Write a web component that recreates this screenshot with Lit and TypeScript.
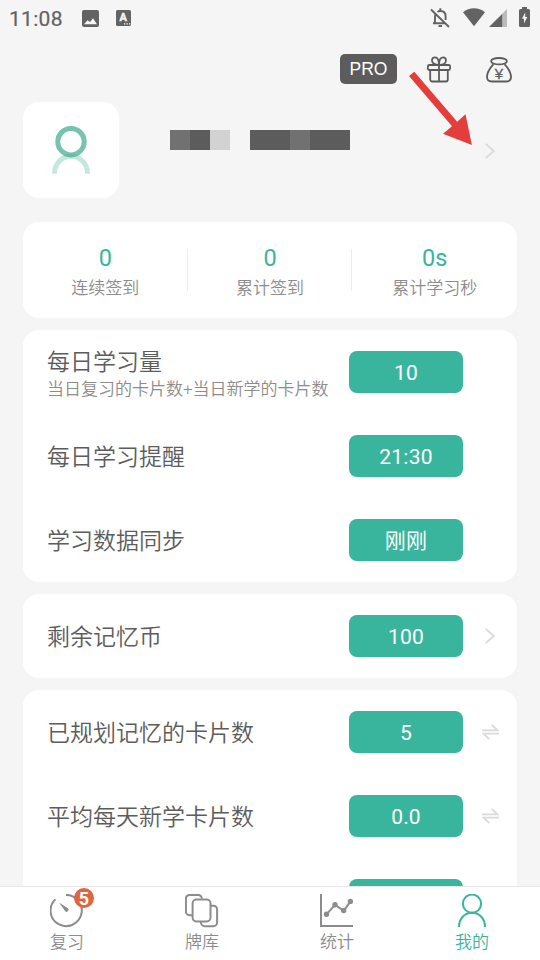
import { css, html, LitElement, svg } from 'lit';
import type { TemplateResult } from 'lit';
import { customElement, property } from 'lit/decorators.js';
import { classMap } from 'lit/directives/class-map.js';

interface Setting {
    label: string;
    note?: string;
    value: string;
    trailing?: 'more' | 'swap';
}

interface Tab {
    label: string;
    icon: TemplateResult;
    badge?: string;
    active?: boolean;
}

const stats = [
    { value: '0', label: '连续签到' },
    { value: '0', label: '累计签到' },
    { value: '0s', label: '累计学习秒' },
];

const groups: Setting[][] = [
    [
        { label: '每日学习量', note: '当日复习的卡片数+当日新学的卡片数', value: '10' },
        { label: '每日学习提醒', value: '21:30' },
        { label: '学习数据同步', value: '刚刚' },
    ],
    [
        { label: '剩余记忆币', value: '100', trailing: 'more' },
    ],
    [
        { label: '已规划记忆的卡片数', value: '5', trailing: 'swap' },
        { label: '平均每天新学卡片数', value: '0.0', trailing: 'swap' },
        { label: '', value: '' },
    ],
];

const tabs: Tab[] = [
    {
        label: '复习',
        badge: '5',
        icon: svg`
            <path d="M16 .9A15.6 15.6 0 1 1 5.4 5.2"/>
            <path class="solid" d="M9 8.6L17.9 14.2A2 2 0 0 1 15.2 17.3Z"/>`,
    },
    {
        label: '牌库',
        icon: svg`
            <path d="M7 21.2H4.6a3.7 3.7 0 0 1-3.7-3.7V4.6A3.7 3.7 0 0 1 4.6.9h8.5a3.7 3.7 0 0 1 3.7 3.7"/>
            <rect x="7.6" y="5.5" width="17.9" height="21.9" rx="3.7"/>
            <path d="M16 27.8v.7a3.7 3.7 0 0 0 3.7 3.7h8.7a3.7 3.7 0 0 0 3.7-3.7V15.4a3.7 3.7 0 0 0-3.7-3.7h-2.5"/>`,
    },
    {
        label: '统计',
        icon: svg`
            <path d="M1 0V32H33"/>
            <path d="M6.5 20.3L15 10.8L23.7 16.8L30.4 7.3"/>
            <g class="solid">
                <circle cx="6.5" cy="20.3" r="2.7"/>
                <circle cx="15" cy="10.8" r="2.7"/>
                <circle cx="23.7" cy="16.6" r="2.7"/>
                <circle cx="30.4" cy="7.4" r="2.7"/>
            </g>`,
    },
    {
        label: '我的',
        active: true,
        icon: svg`
            <circle cx="17" cy="9.7" r="9.1"/>
            <path d="M4 33C4 24.5 9.5 18.8 17 18.8S30 24.5 30 33"/>`,
    },
];

@customElement('status-bar')
export class StatusBar extends LitElement {

    static styles = css`
            :host {
                display: flex;
                align-items: flex-start;
                height: 36px;
                padding: 7px 10px 0 9px;
                box-sizing: border-box;
                color: #636363;
            }
            svg {
                display: block;
                fill: currentColor;
            }
            .time {
                width: 73px;
                font-size: 21px;
                line-height: 24px;
                letter-spacing: .3px;
                -webkit-text-stroke: .2px currentColor;
            }
            .picture {
                margin: 3px 17px 0 0;
            }
            .keyboard {
                margin-top: 3px;
            }
            .letter {
                font: bold 11px Roboto, sans-serif;
                fill: #f5f5f5;
                stroke: #f5f5f5;
                stroke-width: .4;
            }
            .spacer {
                flex: 1;
            }
            .bell {
                margin-right: 13px;
                fill: none;
                stroke: currentColor;
                stroke-width: 1.9;
            }
            .wifi {
                margin: 1px 4px 0 0;
            }
            .signal {
                margin: 2px 12px 0 0;
            }
            `;

    render() {
        return html`
            <div class="time">11:08</div>
            <svg class="picture" width="17" height="17" viewBox="0 0 17 17">
                <path fill-rule="evenodd" d="M2 0h13a2 2 0 0 1 2 2v13a2 2 0 0 1-2 2H2a2 2 0 0 1-2-2V2a2 2 0 0 1 2-2ZM2 14.3h13l-4-6-3 3.8L5.5 10.2Z"/>
            </svg>
            <svg class="keyboard" width="15" height="16" viewBox="0 0 15 16">
                <rect width="15" height="16" rx="1.5"/>
                <text class="letter" x="7.3" y="11.3" text-anchor="middle">A</text>
                <path fill="#f5f5f5" d="M8 13.3h1.3v1.3H8zM10.5 13.3h1.3v1.3h-1.3zM13 13.3h1.3v1.3H13z"/>
            </svg>
            <div class="spacer"></div>
            <svg class="bell" width="20" height="21" viewBox="0 0 20 21">
                <path d="M1 2.5L19 20M3 16.3H14.5M5 16V9.5Q5 7.5 5.9 6.3M7.5 4.9Q8.5 4 10.5 4C14 4 15.6 6.5 15.6 9.5V13"/>
                <path d="M10.3 1.2V4M8.5 19H12"/>
            </svg>
            <svg class="wifi" width="22" height="19" viewBox="0 0 22 19">
                <path d="M0 4.2C6-1 16-1 22 4.2L11 18.3Z"/>
            </svg>
            <svg class="signal" width="18" height="18" viewBox="0 0 18 18">
                <path opacity=".4" d="M18 0V18H13.3V4.7Z"/>
                <path d="M0 18L13.3 4.7V18Z"/>
            </svg>
            <svg width="11" height="20" viewBox="0 0 11 20">
                <path fill-rule="evenodd" d="M3 0h5v2h1.5A1.5 1.5 0 0 1 11 3.5v15A1.5 1.5 0 0 1 9.5 20h-8A1.5 1.5 0 0 1 0 18.5v-15A1.5 1.5 0 0 1 1.5 2H3ZM6.2 5.5L3 11.8H5V16.5L8.3 9.9H6.2Z"/>
            </svg>
        `;
    }
}

@customElement('setting-row')
export class SettingRow extends LitElement {

    @property({type: Object})
    setting: Setting | undefined;

    static styles = css`
            :host {
                display: flex;
                align-items: center;
                height: 84px;
                padding-left: 24px;
            }
            .text {
                flex: 1;
                padding-top: 4px;
                white-space: nowrap;
            }
            .label {
                font-size: 23px;
                line-height: 28px;
                color: #5c5c5c;
            }
            .note {
                margin-top: -1px;
                font-size: 17px;
                line-height: 26px;
                color: #8c8c8c;
            }
            .label:not(:last-child) {
                padding-top: 2px;
            }
            .value {
                width: 114px;
                height: 42px;
                border-radius: 8px;
                background: #39b59d;
                color: #fff;
                font-size: 21px;
                font-weight: 400;
                line-height: 45px;
                letter-spacing: .2px;
                text-align: center;
            }
            .trailing {
                display: flex;
                justify-content: center;
                width: 54px;
            }
            svg {
                fill: none;
                stroke: #dadada;
                stroke-width: 1.8;
            }
            `;

    renderTrailing() {
        if (this.setting?.trailing === 'more') {
            return html`<svg width="10" height="16" viewBox="0 0 10 16"><path d="M.7 .8L8.8 8L.7 15.2"/></svg>`;
        }
        if (this.setting?.trailing === 'swap') {
            return html`<svg width="17" height="16" viewBox="0 0 17 16"><path d="M0 6.4H15.5L9.7 .8M17 9.6H1.5L7.3 15.2"/></svg>`;
        }
        return '';
    }

    render() {
        return html`
            <div class="text">
                <div class="label">${this.setting?.label}</div>
                ${this.setting?.note ? html`<div class="note">${this.setting.note}</div>` : ''}
            </div>
            <div class="value">${this.setting?.value}</div>
            <div class="trailing">${this.renderTrailing()}</div>
        `;
    }
}

@customElement('tab-bar')
export class TabBar extends LitElement {

    static styles = css`
            :host {
                display: flex;
                height: 74px;
                box-sizing: border-box;
                border-top: 1px solid #e8e8e8;
                background: #fff;
            }
            .tab {
                flex: 1;
                display: flex;
                flex-direction: column;
                align-items: center;
                padding-top: 7px;
                padding-right: 1px;
                color: #8c8c8c;
                font-size: 17px;
                line-height: 26px;
            }
            .active {
                color: #39b59d;
            }
            .icon {
                position: relative;
                height: 34px;
                margin-bottom: 1px;
            }
            svg {
                display: block;
                fill: none;
                stroke: currentColor;
                stroke-width: 2;
            }
            .solid {
                fill: currentColor;
                stroke: none;
            }
            .badge {
                position: absolute;
                left: 24px;
                top: -6px;
                width: 20px;
                height: 20px;
                border-radius: 50%;
                background: #dd6640;
                color: #fff;
                font-size: 18px;
                font-weight: 700;
                line-height: 22px;
                text-align: center;
            }
            `;

    render() {
        return html`
            ${tabs.map(tab => html`
                <div class=${classMap({tab: true, active: !!tab.active})}>
                    <div class="icon">
                        <svg width="34" height="34" viewBox="0 0 34 34">${tab.icon}</svg>
                        ${tab.badge ? html`<span class="badge">${tab.badge}</span>` : ''}
                    </div>
                    <div>${tab.label}</div>
                </div>
            `)}
        `;
    }
}

@customElement('app-root')
export class AppRoot extends LitElement {

    static styles = css`
            :host {
                position: relative;
                display: flex;
                flex-direction: column;
                width: 540px;
                height: 960px;
                overflow: hidden;
                background: #f5f5f5;
                font-family: Roboto, "Noto Sans CJK SC", sans-serif;
                font-weight: 400;
            }
            setting-row, tab-bar, .stat-label {
                font-weight: 350;
            }
            svg {
                display: block;
                fill: none;
                stroke: #5c5c5c;
                stroke-width: 1.8;
            }
            .toolbar {
                display: flex;
                justify-content: flex-end;
                align-items: center;
                height: 66px;
                padding-right: 28px;
                box-sizing: border-box;
            }
            .pro {
                width: 57px;
                height: 30px;
                margin-right: 30px;
                border-radius: 5px;
                background: #5c5c5c;
                color: #fff;
                font: 17.5px/31px "Liberation Sans", sans-serif;
                text-align: center;
            }
            .gift {
                margin-right: 35px;
            }
            .yen {
                font: 15px "Liberation Sans", sans-serif;
                fill: #5c5c5c;
                stroke-width: .3;
            }
            .profile {
                display: flex;
                height: 96px;
                margin: 0 23px 24px;
            }
            .avatar {
                display: flex;
                align-items: center;
                justify-content: center;
                width: 96px;
                height: 96px;
                border-radius: 16px;
                background: #fff;
            }
            .avatar svg {
                stroke: #45ab93;
                stroke-width: 5;
            }
            .name {
                flex: 1;
                display: flex;
                padding: 28px 0 0 51px;
            }
            .block {
                width: 20px;
                height: 20px;
                background: #5c5c5c;
            }
            .mid {
                background: #717171;
            }
            .pale {
                background: #d2d2d2;
            }
            .blank {
                background: none;
            }
            .profile .more {
                margin: 41px 22px 0 0;
                stroke: #dadada;
            }
            .card {
                flex: none;
                margin: 0 23px 12px;
                border-radius: 16px;
                background: #fff;
            }
            .stats {
                display: flex;
                align-items: center;
                height: 96px;
            }
            .stat {
                flex: 1;
                height: 42px;
                text-align: center;
            }
            .stat + .stat {
                box-shadow: -1px 0 #ececec;
            }
            .stat-value {
                margin-top: -5px;
                font-size: 23.5px;
                line-height: 28px;
                color: #39b59d;
            }
            .stat-label {
                margin-top: 3px;
                font-size: 17px;
                line-height: 26px;
                color: #8c8c8c;
            }
            .content {
                flex: 1;
                min-height: 0;
                overflow: hidden;
            }
            .pointer {
                position: absolute;
                left: 406px;
                top: 68px;
                fill: #e33e3c;
                stroke: none;
            }
            `;

    render() {
        return html`
            <status-bar></status-bar>
            <div class="toolbar">
                <div class="pro">PRO</div>
                <svg class="gift" width="24" height="27" viewBox="0 0 24 27">
                    <rect x=".9" y="9" width="22.2" height="5" rx="1.5"/>
                    <path d="M3.2 14V23.5a2 2 0 0 0 2 2H18.8a2 2 0 0 0 2-2V14M12 9V25.5"/>
                    <path d="M12 9C8.500 9 5 7.5 5 4.5C5 2.5 6.3 1.3 8.1 1.3C10.7 1.3 12 4.5 12 9C12 4.5 13.3 1.3 15.900 1.3C17.7 1.3 19 2.5 19 4.5C19 7.5 15.5 9 12 9"/>
                </svg>
                <svg width="26" height="27" viewBox="0 0 26 27">
                    <ellipse cx="13" cy="5.2" rx="7.9" ry="3.2"/>
                    <path d="M7.5 8.2C4.5 11.5 1 17 1 21C1 24 3 25.5 6 25.5H20C23 25.5 25 24 25 21C25 17 21.5 11.5 18.5 8.2"/>
                    <text class="yen" x="13" y="22.6" text-anchor="middle">¥</text>
                </svg>
            </div>
            <div class="profile">
                <div class="avatar">
                    <svg width="40" height="50" viewBox="0 0 40 50">
                        <circle cx="20" cy="16.7" r="13.2" opacity=".73"/>
                        <path d="M3.6 48.8V47.6A16.4 16.4 0 0 1 36.4 47.6V48.8" opacity=".3"/>
                    </svg>
                </div>
                <div class="name">
                    ${['mid', '', 'pale', 'blank', '', '', 'mid', '', ''].map(tone => html`<span class="block ${tone}"></span>`)}
                </div>
                <svg class="more" width="10" height="16" viewBox="0 0 10 16"><path d="M.7 .8L8.8 8L.7 15.2"/></svg>
            </div>
            <div class="content">
                <div class="card stats">
                    ${stats.map(stat => html`
                        <div class="stat">
                            <div class="stat-value">${stat.value}</div>
                            <div class="stat-label">${stat.label}</div>
                        </div>
                    `)}
                </div>
                ${groups.map(group => html`
                    <div class="card">
                        ${group.map(setting => html`<setting-row .setting=${setting}></setting-row>`)}
                    </div>
                `)}
            </div>
            <tab-bar></tab-bar>
            <svg class="pointer" width="68" height="80" viewBox="406 68 68 80">
                <path d="M409 76L414.3 71.7L457.2 121.8L465.5 114.3L471.9 145L443 133.8L452 126.3Z"/>
            </svg>
        `;
    }
}
